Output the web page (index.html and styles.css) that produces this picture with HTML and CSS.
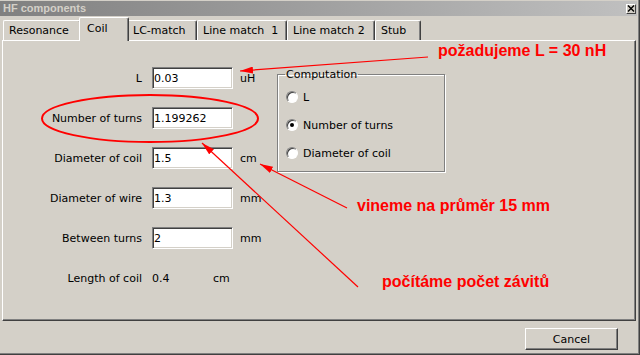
FILE: index.html
```html
<!DOCTYPE html>
<html lang="cs">
<head>
    <meta charset="UTF-8">
    <title>HF components</title>
    <link rel="stylesheet" href="styles.css">
</head>
<body>
    <div class="window">
        <div class="titlebar">
            <span class="title">HF components</span>
            <span class="close">
                <svg width="8" height="7" viewBox="0 0 8 7"><path d="M1 0.5 L7 6.5 M7 0.5 L1 6.5" stroke="#000" stroke-width="1.4"/></svg>
            </span>
        </div>

        <div class="tabs">
            <div class="tab tab-resonance">Resonance</div>
            <div class="tab tab-coil active">Coil</div>
            <div class="tab tab-lc">LC-match</div>
            <div class="tab tab-line1">Line match&nbsp; 1</div>
            <div class="tab tab-line2">Line match 2</div>
            <div class="tab tab-stub">Stub</div>
        </div>

        <div class="panel">
            <div class="fields">
                <div class="row">
                    <label for="l">L</label>
                    <input type="text" id="l" value="0.03">
                    <span class="unit">uH</span>
                </div>
                <div class="row">
                    <label for="turns">Number of turns</label>
                    <input type="text" id="turns" value="1.199262">
                </div>
                <div class="row">
                    <label for="dcoil">Diameter of coil</label>
                    <input type="text" id="dcoil" value="1.5">
                    <span class="unit">cm</span>
                </div>
                <div class="row">
                    <label for="dwire">Diameter of wire</label>
                    <input type="text" id="dwire" value="1.3">
                    <span class="unit">mm</span>
                </div>
                <div class="row">
                    <label for="gap">Between turns</label>
                    <input type="text" id="gap" value="2">
                    <span class="unit">mm</span>
                </div>
                <div class="row">
                    <label>Length of coil</label>
                    <span class="value">0.4</span>
                    <span>cm</span>
                </div>
            </div>

            <fieldset class="group">
                <legend>Computation</legend>
                <div class="radio-row"><span class="radio"></span>L</div>
                <div class="radio-row"><span class="radio checked"></span>Number of turns</div>
                <div class="radio-row"><span class="radio"></span>Diameter of coil</div>
            </fieldset>
        </div>

        <div class="footer">
            <button class="btn">Cancel</button>
        </div>

        <svg class="marks" width="640" height="355" viewBox="0 0 640 355">
            <defs>
                <marker id="head" markerWidth="13" markerHeight="7" refX="13" refY="3.5" orient="auto" markerUnits="userSpaceOnUse">
                    <path d="M0 0 L13 3.5 L0 7 Z" fill="#ff0000"/>
                </marker>
            </defs>
            <ellipse cx="150" cy="118.5" rx="108" ry="23.5" fill="none" stroke="#ff0000" stroke-width="2"/>
            <line x1="428" y1="57" x2="240" y2="71" stroke="#ff0000" stroke-width="1.2" marker-end="url(#head)"/>
            <line x1="347" y1="208" x2="260" y2="164" stroke="#ff0000" stroke-width="1.2" marker-end="url(#head)"/>
            <line x1="358" y1="287" x2="202" y2="143" stroke="#ff0000" stroke-width="1.2" marker-end="url(#head)"/>
        </svg>

        <div class="note note-l">požadujeme L = 30 nH</div>
        <div class="note note-d">vineme na průměr 15 mm</div>
        <div class="note note-n">počítáme počet závitů</div>
    </div>
</body>
</html>
```

FILE: styles.css
```css
body {
    margin: 0;
    font-family: "DejaVu Sans", sans-serif;
    font-size: 11px;
    color: #000;
    background-color: #d4d0c8;
}
.window {
    position: relative;
    width: 640px;
    height: 355px;
    box-sizing: border-box;
    padding: 0 2px 2px 0;
    border-right: 1px solid #404040;
    border-bottom: 1px solid #404040;
    box-shadow: inset -1px -1px #808080;
    background: #d4d0c8;
    display: flex;
    flex-direction: column;
}
.titlebar {
    height: 15px;
    margin-top: 1px;
    display: flex;
    align-items: center;
    background: linear-gradient(to right, #808080, #c0c0c0);
}
.title {
    padding-left: 3px;
    font-family: "Liberation Sans", Arial, sans-serif;
    font-weight: bold;
    font-size: 11px;
    line-height: 15px;
    color: #d4d0c8;
}
.close {
    margin-left: auto;
    margin-right: 1px;
    width: 10px;
    height: 10px;
    box-sizing: border-box;
    background: #d4d0c8;
    border-top: 1px solid #fff;
    border-left: 1px solid #fff;
    border-right: 1px solid #404040;
    border-bottom: 1px solid #404040;
    display: flex;
    align-items: center;
    justify-content: center;
}
.close svg {
    display: block;
}
.tabs {
    position: relative;
    z-index: 1;
    height: 23px;
    margin-top: 1px;
    padding-left: 3px;
    display: flex;
    align-items: flex-end;
}
.tab {
    height: 20px;
    box-sizing: border-box;
    padding-left: 5px;
    line-height: 19px;
    white-space: nowrap;
    border-top: 1px solid #fff;
    border-left: 1px solid #fff;
    border-right: 1px solid #404040;
    border-radius: 2px 2px 0 0;
    box-shadow: inset -1px 0 #808080;
    background: #d4d0c8;
}
.tab-resonance { width: 78px; }
.tab-coil { width: 46px; }
.tab-lc { width: 70px; }
.tab-line1 { width: 90px; }
.tab-line2 { width: 88px; }
.tab-stub { width: 46px; }
.tab.active {
    position: relative;
    z-index: 2;
    width: 50px;
    height: 24px;
    margin: 0 -2px -1px;
    padding-left: 7px;
    line-height: 22px;
}
.panel {
    width: 634px;
    height: 281px;
    margin-left: 2px;
    box-sizing: border-box;
    border-top: 1px solid #fff;
    border-left: 1px solid #fff;
    border-right: 1px solid #404040;
    border-bottom: 1px solid #404040;
    box-shadow: inset -1px -1px #808080;
    display: flex;
    align-items: flex-start;
}
.fields {
    width: 274px;
    padding-top: 26px;
}
.row {
    height: 22px;
    margin-bottom: 18px;
    display: flex;
    align-items: center;
}
.row label {
    width: 139px;
    margin-right: 10px;
    text-align: right;
}
.row input {
    width: 81px;
    height: 22px;
    box-sizing: border-box;
    margin: 0;
    padding: 0 0 0 1px;
    font-family: "DejaVu Sans", sans-serif;
    font-size: 11px;
    color: #000;
    background: #fff;
    border-top: 1px solid #808080;
    border-left: 1px solid #808080;
    border-right: 1px solid #fff;
    border-bottom: 1px solid #fff;
    box-shadow: inset 1px 1px #404040, inset -1px -1px #d4d0c8;
    outline: none;
}
.unit {
    margin-left: 7px;
}
.value {
    width: 61px;
}
.group {
    width: 168px;
    height: 104px;
    box-sizing: border-box;
    margin: 27px 0 0 0;
    padding: 2px 8px 0 7px;
    border: 1px solid #808080;
    box-shadow: inset 1px 1px #fff, 1px 1px #fff;
}
.group legend {
    padding: 0 1px;
    line-height: 13px;
}
.radio-row {
    height: 28px;
    display: flex;
    align-items: center;
}
.radio {
    position: relative;
    width: 12px;
    height: 12px;
    box-sizing: border-box;
    margin: 0 5px 0 1px;
    border-radius: 50%;
    background: #fff;
    border: 1px solid;
    border-color: #808080 #fff #fff #808080;
    box-shadow: inset 1px 1px #404040;
}
.radio.checked::after {
    content: "";
    position: absolute;
    left: 3px;
    top: 3px;
    width: 4px;
    height: 4px;
    border-radius: 50%;
    background: #000;
}
.footer {
    flex: 1;
    display: flex;
    justify-content: flex-end;
    align-items: flex-start;
    padding: 7px 19px 0 0;
}
.btn {
    width: 93px;
    height: 22px;
    margin: 0;
    padding: 0;
    font-family: "DejaVu Sans", sans-serif;
    font-size: 11px;
    color: #000;
    background: #d4d0c8;
    border-top: 1px solid #fff;
    border-left: 1px solid #fff;
    border-right: 1px solid #404040;
    border-bottom: 1px solid #404040;
    box-shadow: inset -1px -1px #808080;
}
.marks {
    position: absolute;
    left: 0;
    top: 0;
    z-index: 5;
    pointer-events: none;
}
.note {
    position: absolute;
    z-index: 6;
    font-family: "Liberation Sans", Arial, sans-serif;
    font-weight: bold;
    font-size: 16px;
    line-height: 18px;
    color: #ff0000;
    white-space: nowrap;
}
.note-l {
    left: 438px;
    top: 42px;
}
.note-d {
    left: 357px;
    top: 197px;
}
.note-n {
    left: 382px;
    top: 273px;
}
```
